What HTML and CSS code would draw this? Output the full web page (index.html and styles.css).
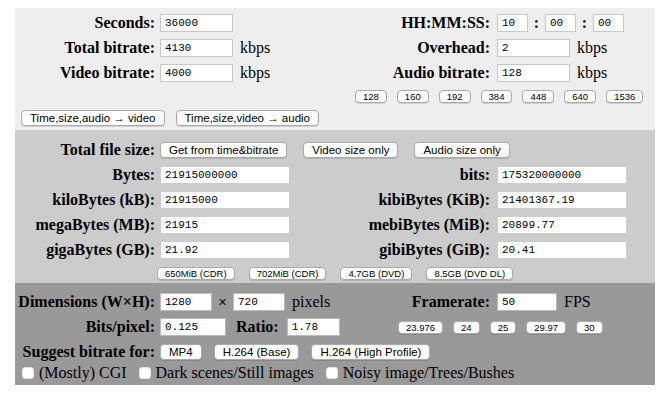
FILE: index.html
```html
<!DOCTYPE html>
<html>
<head>
    <title>Video bitrate calculator</title>
    <link rel="stylesheet" href="styles.css">
</head>
<body>
<div class="calc">
    <!-- time and bitrate -->
    <div class="panel top">
        <span class="lab">Seconds:</span>
        <div class="cell"><input class="w73" value="36000"></div>
        <span class="lab r">HH:MM:SS:</span>
        <div class="cell">
            <input class="w31" value="10"><b class="colon">:</b><input class="w31" value="00"><b class="colon">:</b><input class="w31" value="00">
        </div>

        <span class="lab">Total bitrate:</span>
        <div class="cell"><input class="w73" value="4130"><span class="unit">kbps</span></div>
        <span class="lab r">Overhead:</span>
        <div class="cell"><input class="w73" value="2"><span class="unit">kbps</span></div>

        <span class="lab">Video bitrate:</span>
        <div class="cell"><input class="w73" value="4000"><span class="unit">kbps</span></div>
        <span class="lab r">Audio bitrate:</span>
        <div class="cell"><input class="w73" value="128"><span class="unit">kbps</span></div>

        <div class="btnrow audio">
            <button class="btn sm">128</button>
            <button class="btn sm">160</button>
            <button class="btn sm">192</button>
            <button class="btn sm">384</button>
            <button class="btn sm">448</button>
            <button class="btn sm">640</button>
            <button class="btn sm">1536</button>
        </div>

        <div class="btnrow calcs">
            <button class="btn">Time,size,audio &rarr; video</button>
            <button class="btn">Time,size,video &rarr; audio</button>
        </div>
    </div>

    <!-- file size -->
    <div class="panel mid">
        <span class="lab">Total file size:</span>
        <div class="btnrow sizes">
            <button class="btn">Get from time&amp;bitrate</button>
            <button class="btn">Video size only</button>
            <button class="btn">Audio size only</button>
        </div>

        <span class="lab">Bytes:</span>
        <div class="cell"><input class="w130" value="21915000000"></div>
        <span class="lab r">bits:</span>
        <div class="cell"><input class="w130" value="175320000000"></div>

        <span class="lab">kiloBytes (kB):</span>
        <div class="cell"><input class="w130" value="21915000"></div>
        <span class="lab r">kibiBytes (KiB):</span>
        <div class="cell"><input class="w130" value="21401367.19"></div>

        <span class="lab">megaBytes (MB):</span>
        <div class="cell"><input class="w130" value="21915"></div>
        <span class="lab r">mebiBytes (MiB):</span>
        <div class="cell"><input class="w130" value="20899.77"></div>

        <span class="lab">gigaBytes (GB):</span>
        <div class="cell"><input class="w130" value="21.92"></div>
        <span class="lab r">gibiBytes (GiB):</span>
        <div class="cell"><input class="w130" value="20.41"></div>

        <div class="btnrow discs">
            <button class="btn sm">650MiB (CDR)</button>
            <button class="btn sm">702MiB (CDR)</button>
            <button class="btn sm">4.7GB (DVD)</button>
            <button class="btn sm">8.5GB (DVD DL)</button>
        </div>
    </div>

    <!-- picture -->
    <div class="panel bot">
        <span class="lab">Dimensions (W&times;H):</span>
        <div class="cell">
            <input class="w52" value="1280"><span class="times">&times;</span><input class="w52" value="720"><span class="unit">pixels</span>
        </div>
        <span class="lab r">Framerate:</span>
        <div class="cell"><input class="w60" value="50"><span class="unit">FPS</span></div>

        <span class="lab">Bits/pixel:</span>
        <div class="cell">
            <input class="w66" value="0.125"><span class="lab inl">Ratio:</span><input class="w53" value="1.78">
        </div>
        <div class="btnrow fps">
            <button class="btn sm">23.976</button>
            <button class="btn sm">24</button>
            <button class="btn sm">25</button>
            <button class="btn sm">29.97</button>
            <button class="btn sm">30</button>
        </div>

        <span class="lab">Suggest bitrate for:</span>
        <div class="btnrow suggest">
            <button class="btn">MP4</button>
            <button class="btn">H.264 (Base)</button>
            <button class="btn">H.264 (High Profile)</button>
        </div>

        <div class="checks">
            <label><input type="checkbox">(Mostly) CGI</label>
            <label><input type="checkbox">Dark scenes/Still images</label>
            <label><input type="checkbox">Noisy image/Trees/Bushes</label>
        </div>
    </div>
</div>
</body>
</html>
```

FILE: styles.css
```css
body {
    margin: 8px 0 0 0;
    background: #fff;
    font-family: "Liberation Serif", "Times New Roman", serif;
    color: #000;
}
.calc {
    width: 640px;
    margin: 0 auto 0 15px;
}
.panel {
    display: grid;
    grid-template-columns: 145px 175px 162px 1fr;
    row-gap: 7px;
    align-items: center;
}
.top {
    background: #eee;
    padding: 6px 0 4px 0;
}
.mid {
    background: #ccc;
    padding: 11px 0 3px 0;
}
.bot {
    background: #999;
    padding: 10px 0 3px 0;
}
.lab {
    font-weight: bold;
    font-size: 16px;
    text-align: right;
    padding-right: 5px;
    white-space: nowrap;
    line-height: 18px;
}
.lab.r {
    padding-right: 7px;
}
.lab.inl {
    padding: 0;
    margin: 0 8px 0 10px;
}
.cell {
    display: flex;
    align-items: center;
    height: 18px;
}
.unit {
    font-size: 16px;
    margin-left: 7px;
    line-height: 18px;
}
.colon {
    font-size: 16px;
    width: 17px;
    text-align: center;
}
.times {
    font-family: "Liberation Sans", Arial, sans-serif;
    font-size: 14px;
    width: 21px;
    text-align: center;
}
input {
    box-sizing: border-box;
    height: 18px;
    border: 1px solid #c8c8c8;
    background: #fff;
    font-family: "Liberation Mono", monospace;
    font-size: 11px;
    padding: 0 4px;
    margin: 0;
}
.w31 { width: 31px; }
.w52 { width: 52px; }
.w53 { width: 53px; }
.w60 { width: 60px; }
.w66 { width: 66px; }
.w73 { width: 73px; }
.w130 { width: 130px; }
.mid input {
    border-color: #ccc;
}
.bot input {
    border-color: #bbb;
}
.btnrow {
    display: flex;
    align-items: center;
}
.btn {
    box-sizing: border-box;
    font-family: "Liberation Sans", Arial, sans-serif;
    font-size: 11.5px;
    height: 16px;
    line-height: 14px;
    padding: 0 8px;
    margin: 0;
    background: #fff;
    border: 1px solid #aaa;
    border-radius: 4px;
    box-shadow: 0 1px 0 rgba(0, 0, 0, 0.12);
    color: #000;
    white-space: nowrap;
}
.btn.sm {
    font-size: 9.5px;
    height: 13px;
    line-height: 11px;
    padding: 0 7px;
}
.audio {
    grid-column: 3 / 5;
    padding-left: 20px;
    gap: 10px;
    margin-top: 1px;
}
.calcs {
    grid-column: 1 / 5;
    padding-left: 6px;
    gap: 11px;
}
.sizes {
    grid-column: 2 / 5;
    gap: 16px;
}
.discs {
    grid-column: 1 / 5;
    justify-content: center;
    gap: 14px;
    margin-top: 1px;
}
.fps {
    grid-column: 3 / 5;
    padding-left: 63px;
    gap: 10px;
}
.suggest {
    grid-column: 2 / 5;
    gap: 12px;
}
.checks {
    grid-column: 1 / 5;
    display: flex;
    align-items: center;
    padding-left: 7px;
    font-size: 16px;
    line-height: 18px;
    margin-top: -4px;
}
.checks label {
    display: flex;
    align-items: center;
    margin-right: 12px;
}
.checks input {
    appearance: none;
    -webkit-appearance: none;
    width: 12px;
    height: 12px;
    padding: 0;
    margin: 0 5px 0 0;
    border: 1px solid #e4e4e4;
    border-radius: 3px;
    background: #fff;
}
```
